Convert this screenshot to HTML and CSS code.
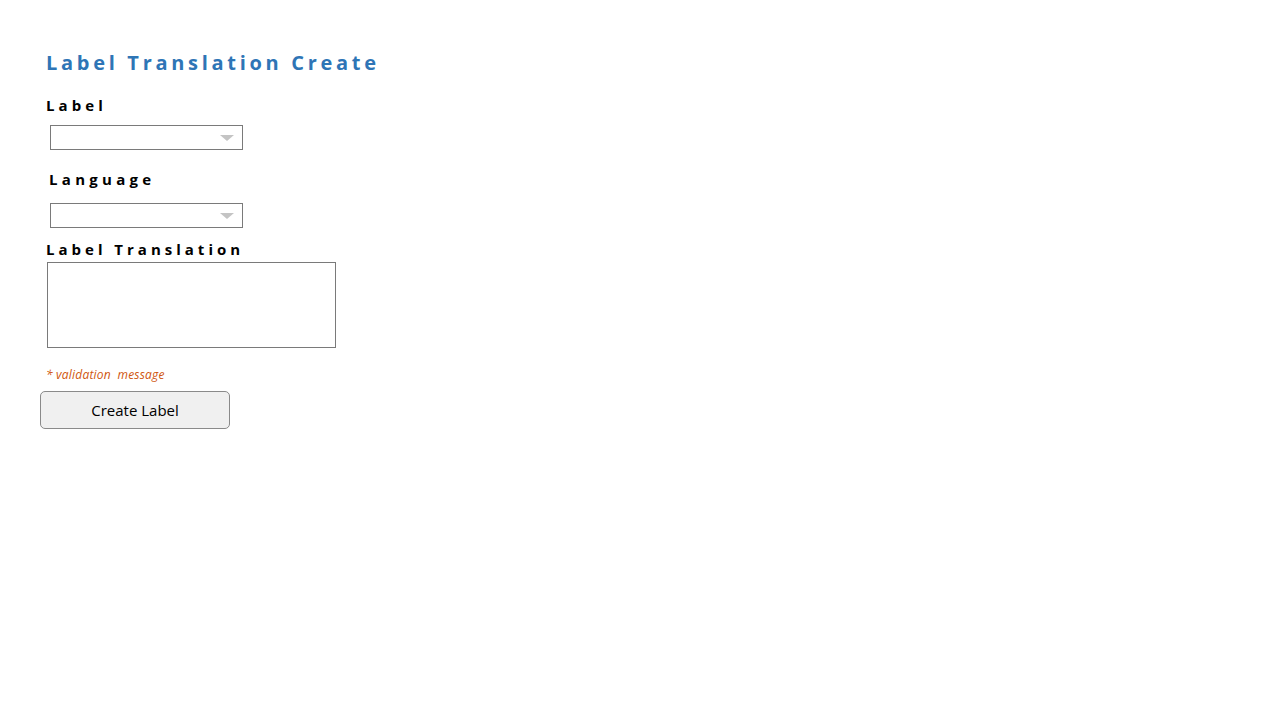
FILE: index.html
```html
<!DOCTYPE html>
<html>
<head>
<meta charset="utf-8">
<link rel="stylesheet" href="styles.css">
</head>
<body>
<div class="page">
  <h1 class="title">Label Translation Create</h1>
  <div class="field-label">Label</div>
  <div class="select"><span class="arrow"></span></div>
  <div class="field-label lang">Language</div>
  <div class="select sel2"><span class="arrow"></span></div>
  <div class="field-label trans">Label Translation</div>
  <div class="textarea"></div>
  <div class="validation">* validation&nbsp; message</div>
  <button class="btn">Create Label</button>
</div>
</body>
</html>
```
FILE: styles.css
```css
html, body {
  margin: 0;
  padding: 0;
  background: #fff;
}
.page {
  padding: 49px 0 0 46px;
  font-family: "Open Sans", "Noto Sans", sans-serif;
  display: flex;
  flex-direction: column;
  align-items: flex-start;
}
.title {
  margin: 0;
  font-size: 20px;
  line-height: 28px;
  font-weight: 700;
  color: #2e75b6;
  letter-spacing: 3.7px;
}
.field-label {
  font-size: 15px;
  font-weight: 700;
  line-height: 20px;
  letter-spacing: 4.1px;
  color: #000;
  margin-top: 18px;
}
.field-label.lang {
  margin-left: 3px;
  margin-top: 19px;
  letter-spacing: 4.3px;
}
.field-label.trans {
  margin-top: 11px;
  letter-spacing: 4px;
}
.select {
  margin-top: 10px;
  margin-left: 4px;
  width: 191px;
  height: 23px;
  border: 1px solid #7a7a7a;
  position: relative;
  box-sizing: content-box;
}
.select.sel2 {
  margin-top: 14px;
}
.arrow {
  position: absolute;
  right: 8px;
  top: 9px;
  width: 0;
  height: 0;
  border-left: 7px solid transparent;
  border-right: 7px solid transparent;
  border-top: 6px solid #c4c4c4;
}
.textarea {
  margin-top: 3px;
  margin-left: 1px;
  width: 287px;
  height: 84px;
  border: 1px solid #7a7a7a;
}
.validation {
  margin-top: 19px;
  font-size: 12px;
  font-style: italic;
  color: #d0560e;
  line-height: 16px;
  letter-spacing: 0.2px;
}
.btn {
  margin-top: 8px;
  margin-left: -6px;
  width: 190px;
  height: 38px;
  border: 1px solid #8a8a8a;
  border-radius: 5px;
  background: #f0f0f0;
  font-family: "Open Sans", "Noto Sans", sans-serif;
  font-size: 15px;
  color: #000;
  padding: 0;
}
```
